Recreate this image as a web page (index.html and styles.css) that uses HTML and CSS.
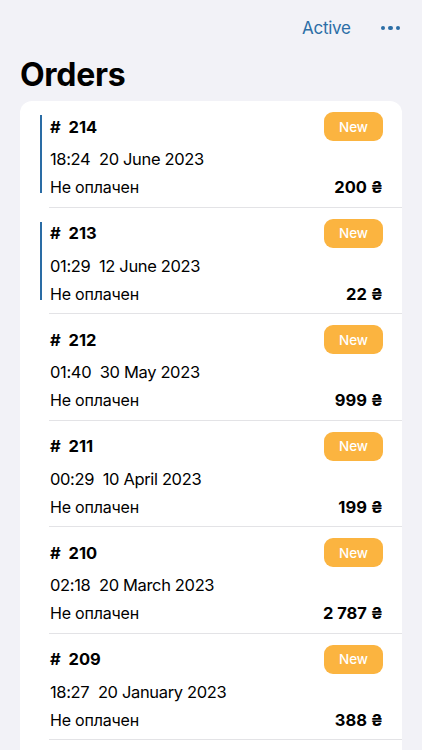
FILE: index.html
```html
<!DOCTYPE html>
<html lang="en">
<head>
<meta charset="utf-8">
<title>Orders</title>
<link rel="stylesheet" href="styles.css">
</head>
<body>
<div class="screen">
  <header class="nav">
    <span class="nav-link">Active</span>
    <span class="more" aria-label="More"><i></i><i></i><i></i></span>
  </header>
  <h1 class="title">Orders</h1>
  <div class="card">
    <div class="order unread">
      <div class="top"><span class="num">#&nbsp; 214</span><span class="badge">New</span></div>
      <div class="date">18:24&nbsp; 20 June 2023</div>
      <div class="bottom"><span class="status">Не оплачен</span><span class="sum">200 ₴</span></div>
    </div>
    <div class="order unread">
      <div class="top"><span class="num">#&nbsp; 213</span><span class="badge">New</span></div>
      <div class="date">01:29&nbsp; 12 June 2023</div>
      <div class="bottom"><span class="status">Не оплачен</span><span class="sum">22 ₴</span></div>
    </div>
    <div class="order">
      <div class="top"><span class="num">#&nbsp; 212</span><span class="badge">New</span></div>
      <div class="date">01:40&nbsp; 30 May 2023</div>
      <div class="bottom"><span class="status">Не оплачен</span><span class="sum">999 ₴</span></div>
    </div>
    <div class="order">
      <div class="top"><span class="num">#&nbsp; 211</span><span class="badge">New</span></div>
      <div class="date">00:29&nbsp; 10 April 2023</div>
      <div class="bottom"><span class="status">Не оплачен</span><span class="sum">199 ₴</span></div>
    </div>
    <div class="order">
      <div class="top"><span class="num">#&nbsp; 210</span><span class="badge">New</span></div>
      <div class="date">02:18&nbsp; 20 March 2023</div>
      <div class="bottom"><span class="status">Не оплачен</span><span class="sum">2 787 ₴</span></div>
    </div>
    <div class="order">
      <div class="top"><span class="num">#&nbsp; 209</span><span class="badge">New</span></div>
      <div class="date">18:27&nbsp; 20 January 2023</div>
      <div class="bottom"><span class="status">Не оплачен</span><span class="sum">388 ₴</span></div>
    </div>
  </div>
</div>
</body>
</html>
```
FILE: styles.css
```css
html, body {
  margin: 0;
  padding: 0;
  background: #f2f2f7;
}
body {
  font-family: Inter, "Liberation Sans", Arial, sans-serif;
  color: #000;
  height: 750px;
  overflow: hidden;
}
.screen {
  padding: 0 20px;
}
.nav {
  height: 56px;
  display: flex;
  align-items: center;
  justify-content: flex-end;
  gap: 30px;
  padding-right: 2px;
}
.nav-link {
  font-size: 17px;
  color: #2c6ea6;
  letter-spacing: -0.3px;
}
.more {
  display: flex;
  gap: 3px;
  align-items: center;
}
.more i {
  display: block;
  width: 4.5px;
  height: 4.5px;
  border-radius: 50%;
  background: #2c6ea6;
}
.title {
  margin: 0;
  font-size: 32px;
  font-weight: 700;
  line-height: 38px;
  height: 45px;
  letter-spacing: -0.3px;
}
.card {
  background: #fff;
  border-radius: 12px;
  overflow: hidden;
  padding-bottom: 30px;
}
.order {
  position: relative;
  margin-left: 29px;
  padding: 11px 19px 9.5px 0;
  border-bottom: 1px solid #e3e3e6;
  display: flex;
  flex-direction: column;
  gap: 8px;
}
.order.unread::before {
  content: "";
  position: absolute;
  left: -9px;
  top: 14px;
  width: 2px;
  height: 78px;
  background: #2a6ca5;
}
.top, .bottom {
  display: flex;
  justify-content: space-between;
  align-items: center;
}
.top {
  height: 29px;
}
.date, .bottom {
  height: 20px;
  line-height: 20px;
}
.num {
  font-size: 16.5px;
  font-weight: 700;
  padding-left: 1px;
}
.badge {
  width: 59px;
  height: 29px;
  border-radius: 9px;
  background: #fbb440;
  color: #fff;
  font-size: 13.5px;
  font-weight: 500;
  display: flex;
  align-items: center;
  justify-content: center;
}
.date {
  font-size: 16.5px;
  padding-left: 1px;
  letter-spacing: -0.35px;
}
.status {
  font-size: 16px;
  padding-left: 1px;
  letter-spacing: -0.2px;
}
.sum {
  font-size: 16.5px;
  font-weight: 700;
}
```
